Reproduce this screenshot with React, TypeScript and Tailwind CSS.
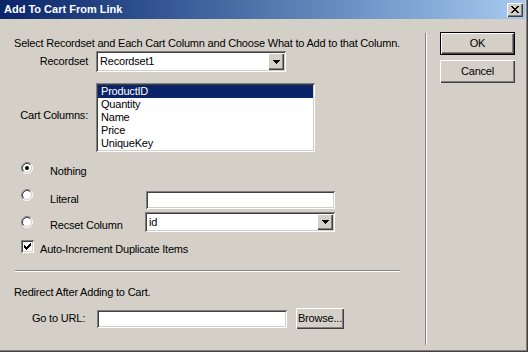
import React from 'react';

const sunken =
  'bg-white shadow-[inset_1px_1px_0_#808080,inset_-1px_-1px_0_#ffffff,inset_2px_2px_0_#404040,inset_-2px_-2px_0_#d4d0c8]';
const raised =
  'bg-[#d4d0c8] shadow-[inset_1px_1px_0_#ffffff,inset_-1px_-1px_0_#404040,inset_-2px_-2px_0_#808080]';

const Radio = ({ checked }: { checked?: boolean }) => (
  <svg width="12" height="12" viewBox="0 0 12 12" className="shrink-0">
    <circle cx="6" cy="6" r="4.5" fill="#ffffff" />
    <path d="M2.11 9.89 A5.5 5.5 0 0 1 9.89 2.11" fill="none" stroke="#808080" strokeWidth="1" />
    <path d="M9.89 2.11 A5.5 5.5 0 0 1 2.11 9.89" fill="none" stroke="#ffffff" strokeWidth="1" />
    <path d="M2.82 9.18 A4.5 4.5 0 0 1 9.18 2.82" fill="none" stroke="#404040" strokeWidth="1" />
    <path d="M9.18 2.82 A4.5 4.5 0 0 1 2.82 9.18" fill="none" stroke="#d4d0c8" strokeWidth="1" />
    {checked && <circle cx="6" cy="6" r="2" fill="#000000" />}
  </svg>
);

const Checkbox = () => {
  // classic 7px check mark, one 3px column per x
  const cols = [5, 6, 7, 6, 5, 4, 3];
  return (
    <div className={`${sunken} w-[13px] h-[13px] shrink-0`}>
      <svg width="13" height="13" viewBox="0 0 13 13" shapeRendering="crispEdges">
        {cols.map((y, i) => (
          <rect key={i} x={3 + i} y={y} width="1" height="3" fill="#000000" />
        ))}
      </svg>
    </div>
  );
};

const DownArrow = () => (
  <svg width="7" height="4" viewBox="0 0 7 4" shapeRendering="crispEdges">
    <rect x="0" y="0" width="7" height="1" fill="#000" />
    <rect x="1" y="1" width="5" height="1" fill="#000" />
    <rect x="2" y="2" width="3" height="1" fill="#000" />
    <rect x="3" y="3" width="1" height="1" fill="#000" />
  </svg>
);

const Combo = ({ value, className }: { value: string; className: string }) => (
  <div className={`${sunken} ${className} flex items-center p-[2px] shrink-0`}>
    <span className="flex-1 pl-[2px]">{value}</span>
    <div className={`${raised} w-[16px] h-full flex items-center justify-center`}>
      <DownArrow />
    </div>
  </div>
);

const CloseGlyph = () => {
  const px = [
    [0, 0, 2], [6, 0, 2],
    [1, 1, 2], [5, 1, 2],
    [2, 2, 4],
    [3, 3, 2],
    [2, 4, 4],
    [1, 5, 2], [5, 5, 2],
    [0, 6, 2], [6, 6, 2],
  ];
  return (
    <svg width="8" height="7" viewBox="0 0 8 7" shapeRendering="crispEdges">
      {px.map(([x, y, w], i) => (
        <rect key={i} x={x} y={y} width={w} height="1" fill="#000" />
      ))}
    </svg>
  );
};

const columns = ['ProductID', 'Quantity', 'Name', 'Price', 'UniqueKey'];

export default function App() {
  return (
    <div className="w-[528px] h-[352px] bg-[#d4d0c8] flex flex-col text-black text-[11px] leading-[13px] tracking-[-0.2px] font-['Liberation_Sans',Arial,sans-serif] shadow-[inset_-1px_-1px_0_#404040,inset_-2px_-2px_0_#808080] overflow-hidden">
      {/* title bar */}
      <div className="h-[19px] mr-[3px] flex items-center bg-linear-to-r from-[#0a246a] to-[#a6caf0] pl-[4px] pr-[2px] shrink-0">
        <span className="font-bold text-white tracking-normal">Add To Cart From Link</span>
        <div className={`${raised} ml-auto w-[16px] h-[14px] flex items-center justify-center pr-[1px]`}>
          <CloseGlyph />
        </div>
      </div>

      <div className="flex flex-1">
        {/* left side */}
        <div className="w-[425px] pl-[14px] flex flex-col">
          <div className="mt-[18px] h-[13px] whitespace-nowrap">
            Select Recordset and Each Cart Column and Choose What to Add to that Column.
          </div>

          <div className="mt-[1px] h-[21px] flex items-center">
            <div className="w-[74px] text-right">Recordset</div>
            <Combo value="Recordset1" className="ml-[8px] w-[190px] h-[21px]" />
          </div>

          <div className="mt-[11px] flex items-start">
            <div className="w-[74px] text-right mt-[26px]">Cart Columns:</div>
            <div className={`${sunken} ml-[8px] w-[219px] h-[69px] p-[2px]`}>
              {columns.map((c, i) => (
                <div
                  key={c}
                  className={`h-[13px] pl-[3px] ${i === 0 ? 'bg-[#0a246a] text-white' : ''}`}
                >
                  {c}
                </div>
              ))}
            </div>
          </div>

          <div className="mt-[10px] h-[27px] flex items-start">
            <div className="ml-[7px]">
              <Radio checked />
            </div>
            <div className="ml-[17px] mt-[3px]">Nothing</div>
          </div>

          <div className="h-[23px] flex items-start">
            <div className="ml-[7px]">
              <Radio />
            </div>
            <div className="ml-[17px] mt-[4px] w-[96px]">Literal</div>
            <div className={`${sunken} mt-[2px] w-[189px] h-[18px]`} />
          </div>

          <div className="h-[28px] flex items-start">
            <div className="ml-[7px] mt-[4px]">
              <Radio />
            </div>
            <div className="ml-[17px] mt-[7px] w-[95px]">Recset Column</div>
            <Combo value="id" className="w-[190px] h-[20px]" />
          </div>

          <div className="h-[30px] flex items-start">
            <div className="ml-[7px]">
              <Checkbox />
            </div>
            <div className="ml-[6px] mt-[3px]">Auto-Increment Duplicate Items</div>
          </div>

          <div className="ml-[1px] w-[385px] h-[2px] border-t border-t-[#808080] border-b border-b-white" />

          <div className="mt-[14px] h-[13px]">Redirect After Adding to Cart.</div>

          <div className="mt-[9px] h-[21px] flex items-center">
            <div className="w-[83px] pr-[12px] text-right">Go to URL:</div>
            <div className={`${sunken} w-[190px] h-[18px]`} />
            <div className={`${raised} ml-[9px] w-[48px] h-[21px] flex items-center justify-center`}>
              Browse...
            </div>
          </div>
        </div>

        {/* vertical divider */}
        <div className="mt-[14px] w-[2px] h-[312px] border-l border-l-[#808080] border-r border-r-white" />

        {/* buttons */}
        <div className="pl-[13px] pt-[13px] flex flex-col">
          <div className="w-[75px] h-[23px] border border-black">
            <div className={`${raised} w-full h-full flex items-center justify-center`}>OK</div>
          </div>
          <div className={`${raised} mt-[5px] w-[75px] h-[23px] flex items-center justify-center`}>
            Cancel
          </div>
        </div>
      </div>
    </div>
  );
}
